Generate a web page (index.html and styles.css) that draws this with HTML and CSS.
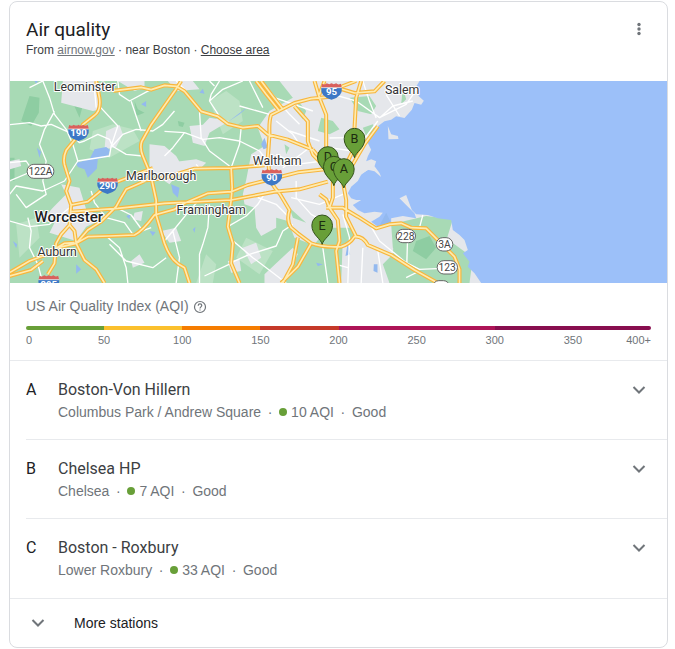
FILE: index.html
```html
<!DOCTYPE html>
<html lang="en">
<head>
<meta charset="utf-8">
<meta name="viewport" content="width=device-width, initial-scale=1">
<title>Air quality</title>
<link rel="stylesheet" href="styles.css">
</head>
<body>
<main class="card">
  <header class="header">
    <div>
      <h1 class="title">Air quality</h1>
      <p class="source">From <a class="muted" href="#">airnow.gov</a> · near Boston · <a href="#">Choose area</a></p>
    </div>
    <button class="icon-button menu" type="button" aria-label="More options">
      <svg width="16" height="16" viewBox="0 0 16 16"><circle cx="8" cy="3.5" r="1.7"/><circle cx="8" cy="8" r="1.7"/><circle cx="8" cy="12.5" r="1.7"/></svg>
    </button>
  </header>

  <svg class="map" viewBox="0 0 1974 606" preserveAspectRatio="xMidYMid slice" role="img" aria-label="Map of monitoring stations">
    <defs>
      <path id="pin" d="M0 0C-4-18-31-28-31-57A31 31 0 0 1 31-57C31-28 4-18 0 0Z"/>
      <g id="interstate">
        <path d="M-28-22Q-20-17-14-23Q-7-18 0-23Q7-18 14-23Q20-17 28-22L31-10H-31Z" fill="#d9605c"/>
        <path d="M-31-10H31Q34 17 0 26Q-34 17-31-10Z" fill="#3d78c6"/>
        <path d="M-31-10H31" stroke="#fff" stroke-width="2"/>
      </g>
      <path id="highways" d="M260 0L270 51Q275 90 255 103L220 131 200 171 170 208Q160 230 165 251L180 300 170 330 185 372 180 432
        M270 11L315 29 395 19 425 26 465 13 500 16 525 31 575 91 625 106 655 129 700 140 745 135 775 161 835 176 910 206
        M515 0L495 31 425 131 397 181Q390 200 400 225L415 261 427 297 440 357 440 402 465 487Q480 530 505 548L525 560 540 606
        M430 261L365 286 290 315 265 337 235 362 185 372
        M425 290L400 303 350 325 335 350 320 377 275 422 235 447 200 487 135 502 100 525 60 540 0 575M0 585L65 567 100 540
        M135 502L200 487 235 467 300 465 375 462Q400 450 435 402L495 385 525 367 595 337 665 332 715 312 775 297 865 274 945 265 1005 268
        M185 392L325 382 465 367 665 357 795 332 870 325 955 302M395 300L465 291 555 263 665 261 765 253
        M1125 0L1095 31 1035 36 985 21 960 30 975 46 905 53 855 66 785 101Q778 120 780 161L775 231 780 281Q780 305 810 337L840 387Q830 420 845 440L865 457 905 487Q940 500 995 497 1020 490 1035 467 1060 465 1075 492L1145 522 1215 567 1285 606
        M755 0L785 40 820 85M740 0L770 40 810 90M915 0L930 51 950 101 950 200 960 250 1000 300 1010 357 1010 407 1040 467
        M945 0L930 40M1040 0L985 21M1055 0L1040 51 1035 141 1040 190 1015 240 990 290M1105 136L1065 190 1030 250 1005 280M855 76L895 121 895 181 910 221 950 262
        M910 206L930 230 965 290M950 380L1000 380 1045 407 1100 442 1140 430 1175 427 1205 440 1250 442 1295 487 1335 527 1350 565V606M970 297V350L960 380 985 417 990 480 980 510 990 606
        M930 340L950 355 960 380M905 487L865 557 815 606M865 470L850 550 820 606M665 260L668 320 665 357 655 437 670 487 665 547 690 606
        M180 432L195 450 200 487 225 537 260 565 285 606M180 432L155 460 140 487 135 547 115 580M140 502L165 487 195 485"/>
    </defs>
    <rect width="1974" height="606" fill="#a8dab5"/>
    <g fill="#bce2c5"><path d="M250 150L310 130 370 145 390 180 300 230 240 205ZM600 60L650 30 690 60 700 120 640 160ZM20 430L80 410 90 470 30 530ZM590 520L620 550 610 606H560ZM710 470L790 510 750 580 680 530Z"/></g>
    <g fill="#8ecda2"><path d="M60 45L90 50 88 95 65 135 35 120ZM505 120L525 125 520 138 508 135ZM375 60L385 85 405 95 380 105ZM190 65L225 55 210 110ZM0 230H15V300H0Z"/></g>
    <g fill="#e5e7eb">
      <path d="M160 0H265L275 85 250 90 155 65ZM290 150L330 132 340 160 320 198 285 205ZM130 380L170 340 155 310 210 320 230 385 285 412 230 437 200 480 120 455 135 425 95 420ZM0 240L30 235 35 255 0 265ZM420 190L465 195 500 225 520 260 480 310 420 270ZM540 135L580 131 600 110 660 120 625 140 600 155 585 195 550 185ZM440 250L560 235 590 245 570 265 445 295ZM475 0H550L570 25 500 30ZM365 540L390 520 405 545 370 560ZM375 395L400 390 395 420 370 415ZM455 450L500 440 515 480 480 485ZM325 0H405V20L375 30ZM700 500L740 485 755 530 725 550ZM655 540L690 535 695 570 665 575ZM765 580L850 500 865 520 820 606H765Z"/>
      <path d="M810 0L850 50 780 90 745 140 765 195 725 220 710 297 700 340 705 370 735 380 740 440 755 465 800 440 800 410 835 420 855 470 905 490 970 490 1000 470 995 606H1140L1120 550 1150 520 1155 440 1280 460 1335 490 1390 530 1380 606H1500V0Z"/>
    </g>
    <g fill="#a8dab5"><path d="M870 65L890 90 880 115 855 85ZM935 110L970 120 990 145 960 160 925 150ZM1020 50L1080 45 1100 75 1085 100 1045 90ZM1060 140L1090 130 1100 150 1070 165ZM955 440L1030 440 1035 462 1000 498 915 490ZM1145 430L1250 405 1330 415 1310 480 1350 530 1345 606H1140L1150 550 1195 530 1150 500ZM840 380L890 425 850 410ZM825 190L840 200 830 220ZM1180 20L1190 55 1175 70Z"/><path d="M1220 480L1260 465 1280 500 1250 535 1210 510Z" fill="#8ecda2"/></g>
    <path fill="#9cc0f9" d="M1230 0L1218 20 1228 46 1243 59 1235 71 1215 66 1207 86 1185 111 1160 106 1145 116 1125 121 1105 136 1095 151 1080 166 1075 186 1085 206 1075 226 1070 241 1085 235 1100 241 1095 256 1110 276 1115 288 1095 271 1075 266 1055 281 1045 300 1025 317 1015 337 1025 352 1040 357 1055 357 1030 372 1045 387 1065 397 1095 392 1120 395 1110 407 1085 422 1105 437 1145 427 1145 412 1180 405 1220 412 1215 397 1190 372 1170 352 1190 342 1207 387 1220 400 1255 402 1285 412 1325 417 1330 447 1350 462 1365 477 1375 507 1360 517 1380 542 1375 557 1395 577 1415 606H1974V0Z"/>
    <path fill="#e5e7eb" d="M1135 135L1145 160 1165 165 1167 174 1137 175ZM1040 240L1062 236 1064 256 1085 262 1060 276 1035 268Z"/>
    <path fill="#93b9ef" d="M200 246L240 235 255 205 290 198 302 207 295 227 265 235 262 263 235 290 225 265 205 258ZM82 200L95 212 90 230ZM395 70L410 60V78ZM570 35L580 23 585 38ZM655 123L705 85 713 80 690 100ZM765 170L775 200 762 205 755 190ZM485 310L510 320 505 350 490 335ZM10 480L23 490 20 502ZM200 550L215 565 200 578ZM420 450L438 453 430 465ZM550 445L558 437 555 455ZM1015 485L1022 520 1008 525ZM1093 550H1104V575L1092 570ZM920 545L940 550 925 556ZM980 20L990 10 1000 21ZM1002 8L1015 17ZM1130 395L1145 425 1110 434ZM350 405L362 400 360 415ZM75 0H85L80 8Z"/>
    <g class="streets">
      <path d="M0 131L60 125 95 135 125 130 180 155 210 185 225 180 265 160 300 175 308 195 340 160 380 145 430 150 460 130 495 90M100 0L120 50 135 100 170 145 190 190 205 240 165 300 100 330 20 315 0 340M100 0L60 20M135 91L105 145 90 190 110 240 100 300 110 340 50 380 20 340M325 0L330 40 360 60 425 25M265 70L325 135 305 195 300 225 205 240M308 195L350 220 400 225M0 245L50 240 70 270 0 300M255 25L260 80M365 61L395 150M0 420L60 437 120 430 180 380M245 330L255 365 290 410 345 425 370 460 425 440M290 465L330 500 350 560 355 606M55 410L65 450 60 500 85 550 100 606M300 490L350 540 430 560 470 530M320 380L365 402 400 450"/>
      <path d="M465 151L525 155 580 175 630 170 690 180 750 210 770 235M525 155L490 200 465 225M570 91L575 170 600 210 660 255M630 0L605 40 600 60 630 106M695 140L690 190 665 260M600 60L640 25 700 0M690 75L780 100M560 250L570 262M570 355L535 395 490 450 465 480M490 450L510 530 500 606M600 370L595 440 580 490 570 520 570 606M655 437L710 405 745 370 770 330M585 585L665 547M665 475L730 530 790 575 830 606M665 545L720 520 800 495 820 450 850 430M745 350L800 370 835 405M800 120L850 160 870 190M780 30L840 100 870 130M720 0L760 80M795 50L910 90M500 0L530 30M600 0L615 15"/>
      <path d="M960 171L1020 170 1060 180M970 40L1040 60 1110 110 1190 70 1225 20M1100 111L1080 61 1060 0M1110 111L1150 75 1210 60M1130 41L1170 105M1105 120L1060 180 1045 230M960 200L1030 210M800 220L860 250 940 240M840 150L930 180M820 260L900 200M845 350L930 370 1000 340M860 300L860 350 905 400 960 430M1000 400L1020 470 1015 606M1085 437L1110 480 1190 545 1230 565 1300 562M1192 545L1195 450M1230 440L1240 402M1060 500L1055 606M1105 510L1120 606M940 500L955 606M1190 590L1230 570M1015 560L980 550"/>
    </g>
    <use href="#highways" class="road-edge"/>
    <use href="#highways" class="road-fill"/>

    <use href="#interstate" x="207" y="154"/><use href="#interstate" x="294" y="313"/><use href="#interstate" x="787" y="288"/><use href="#interstate" x="966" y="30"/><use href="#interstate" x="118" y="606"/>
    <g class="shield">
      <text x="207" y="164">190</text><text x="294" y="325">290</text><text x="787" y="299">90</text><text x="966" y="41">95</text><text x="118" y="620">395</text>
    </g>
    <g class="route-box"><rect x="53" y="250" width="80" height="42" rx="20"/><rect x="1160" y="445" width="58" height="40" rx="20"/><rect x="1280" y="470" width="50" height="40" rx="20"/><rect x="1283" y="539" width="61" height="40" rx="20"/><rect x="1270" y="599" width="50" height="36" rx="18"/></g>
    <g class="route-label"><text x="93" y="282">122A</text><text x="1189" y="476">228</text><text x="1305" y="501">3A</text><text x="1313" y="570">123</text></g>
    <g class="place">
      <text x="226" y="31">Leominster</text><text x="1178" y="38">Salem</text><text x="803" y="252">Waltham</text><text x="455" y="298">Marlborough</text><text x="605" y="398">Framingham</text><text x="143" y="525">Auburn</text><text class="city" x="178" y="424">Worcester</text>
    </g>
    <g class="pins">
      <use href="#pin" x="1035" y="230"/><text x="1035" y="185">B</text>
      <use href="#pin" x="955" y="285"/><text x="955" y="240">D</text>
      <use href="#pin" x="973" y="314"/><text x="973" y="270">C</text>
      <use href="#pin" x="1003" y="321"/><text x="1003" y="277">A</text>
      <use href="#pin" x="938" y="490"/><text x="938" y="446">E</text>
    </g>
  </svg>

  <section class="index">
    <h2 class="index-title">US Air Quality Index (AQI)
      <button class="icon-button help" type="button" aria-label="About this index"><svg width="14" height="14" viewBox="0 0 14 14"><circle cx="7" cy="7" r="5.5"/><path d="M5.2 5.7C5.2 3.2 8.8 3.3 8.8 5.6C8.8 6.8 7 7 7 8.5M7 9.4V10.5"/></svg></button>
    </h2>
    <div class="scale"><i class="good"></i><i class="moderate"></i><i class="sensitive"></i><i class="unhealthy"></i><i class="very"></i><i class="hazardous"></i></div>
    <div class="ticks"><span>0</span><span>50</span><span>100</span><span>150</span><span>200</span><span>250</span><span>300</span><span>350</span><span>400+</span></div>
  </section>

  <ul class="stations">
    <li class="station"><span class="letter">A</span>
      <div class="info"><h3 class="name">Boston-Von Hillern</h3><p class="detail">Columbus Park / Andrew Square<b>·</b><i class="dot"></i>10 AQI<b>·</b>Good</p></div>
      <button class="icon-button expand" type="button" aria-label="Expand Boston-Von Hillern"><svg width="16" height="16" viewBox="0 0 16 16"><path d="M2.5 5L8 10.5 13.5 5"/></svg></button></li>
    <li class="station"><span class="letter">B</span>
      <div class="info"><h3 class="name">Chelsea HP</h3><p class="detail">Chelsea<b>·</b><i class="dot"></i>7 AQI<b>·</b>Good</p></div>
      <button class="icon-button expand" type="button" aria-label="Expand Chelsea HP"><svg width="16" height="16" viewBox="0 0 16 16"><path d="M2.5 5L8 10.5 13.5 5"/></svg></button></li>
    <li class="station"><span class="letter">C</span>
      <div class="info"><h3 class="name">Boston - Roxbury</h3><p class="detail">Lower Roxbury<b>·</b><i class="dot"></i>33 AQI<b>·</b>Good</p></div>
      <button class="icon-button expand" type="button" aria-label="Expand Boston - Roxbury"><svg width="16" height="16" viewBox="0 0 16 16"><path d="M2.5 5L8 10.5 13.5 5"/></svg></button></li>
  </ul>

  <button class="more" type="button"><svg width="16" height="16" viewBox="0 0 16 16"><path d="M2.5 5L8 10.5 13.5 5"/></svg>More stations</button>
</main>
</body>
</html>
```
FILE: styles.css
```css
* { box-sizing: border-box; }

body {
  margin: 1px 7px 0 9px;
  background: #fff;
  color: #202124;
  font-family: "Liberation Sans", Arial, sans-serif;
}

h1, h2, h3, p, ul { margin: 0; padding: 0; font-weight: 400; }

.card {
  border: 1px solid #dadce0;
  border-radius: 8px;
  overflow: hidden;
}

.header {
  display: flex;
  justify-content: space-between;
  align-items: flex-start;
  padding: 16px 16px 22px;
}

.title {
  font: 400 19px/24px Roboto, sans-serif;
}

.source {
  font-size: 12px;
  line-height: 17px;
  color: #3c4043;
}

.source a { color: #3c4043; }
.source a.muted { color: #70757a; }

.icon-button {
  display: flex;
  padding: 4px;
  border: 0;
  background: none;
}

.menu { padding-top: 3px; fill: #70757a; }

.map {
  display: block;
  width: 100%;
  height: 202px;
}

.streets { fill: none; stroke: #fff; stroke-width: 4; stroke-linejoin: round; }
.road-edge, .road-fill { fill: none; stroke-linejoin: round; }
.road-edge { stroke: #f8b63c; stroke-width: 12; }
.road-fill { stroke: #feebb0; stroke-width: 5; }

.map text { text-anchor: middle; font-family: Roboto, sans-serif; }
.shield text { fill: #fff; font-size: 29px; font-weight: 700; }
.route-box rect { fill: #fff; stroke: #666; stroke-width: 3; }
.route-label text { fill: #444; font-size: 31px; }
.place text { fill: #333; font-size: 37px; stroke: #fff; stroke-width: 6; stroke-linejoin: round; paint-order: stroke; }
.place .city { fill: #202124; font-size: 45px; font-weight: 500; }
.pins use { fill: #689f38; stroke: #33511b; stroke-width: 3; }
.pins text { fill: #1c2b10; font-size: 38px; }

.index {
  padding: 13px 16px 12px;
  border-bottom: 1px solid #e8eaed;
}

.index-title {
  display: flex;
  align-items: center;
  font-size: 14px;
  line-height: 20px;
  color: #70757a;
}

.help { padding: 2px 4px 0; }
.help svg { fill: none; stroke: #70757a; stroke-width: 1.2; }

.scale {
  display: grid;
  grid-template-columns: 1fr 1fr 1fr 1fr 2fr 2fr;
  height: 4px;
  margin-top: 10px;
  border-radius: 2px;
  overflow: hidden;
}

.good { background: #689f38; }
.moderate { background: #fbc02d; }
.sensitive { background: #f57c00; }
.unhealthy { background: #c53929; }
.very { background: #ad1457; }
.hazardous { background: #880e4f; }

.ticks {
  display: grid;
  grid-template-columns: minmax(0, 1fr) repeat(7, minmax(0, 2fr)) minmax(0, 1fr);
  margin-top: 2px;
  font-size: 11px;
  line-height: 16px;
  color: #70757a;
  text-align: center;
}

.ticks span:first-child { text-align: left; }
.ticks span:last-child { text-align: right; }

.stations {
  padding-bottom: 1px;
  list-style: none;
  border-bottom: 1px solid #e8eaed;
}

.station {
  display: flex;
  align-items: flex-start;
  margin-left: 16px;
  padding: 17px 16px 17px 0;
}

.station + .station { border-top: 1px solid #e8eaed; }

.letter {
  width: 32px;
  font: 400 16px/24px Roboto, sans-serif;
}

.info { flex: 1; }

.name {
  font: 400 16px/24px Roboto, sans-serif;
  color: #3c4043;
}

.detail {
  display: flex;
  align-items: center;
  font-size: 14px;
  line-height: 20px;
  color: #70757a;
}

.detail b { width: 18px; font-weight: 400; text-align: center; }

.dot {
  width: 8px;
  height: 8px;
  margin-right: 4px;
  border-radius: 50%;
  background: #689f38;
}

.expand svg, .more svg { fill: none; stroke: #70757a; stroke-width: 2; }

.more {
  display: flex;
  align-items: center;
  gap: 28px;
  width: 100%;
  height: 48px;
  padding: 0 20px;
  border: 0;
  background: none;
  font: 400 14px/20px "Liberation Sans", Arial, sans-serif;
  color: #202124;
}
```
